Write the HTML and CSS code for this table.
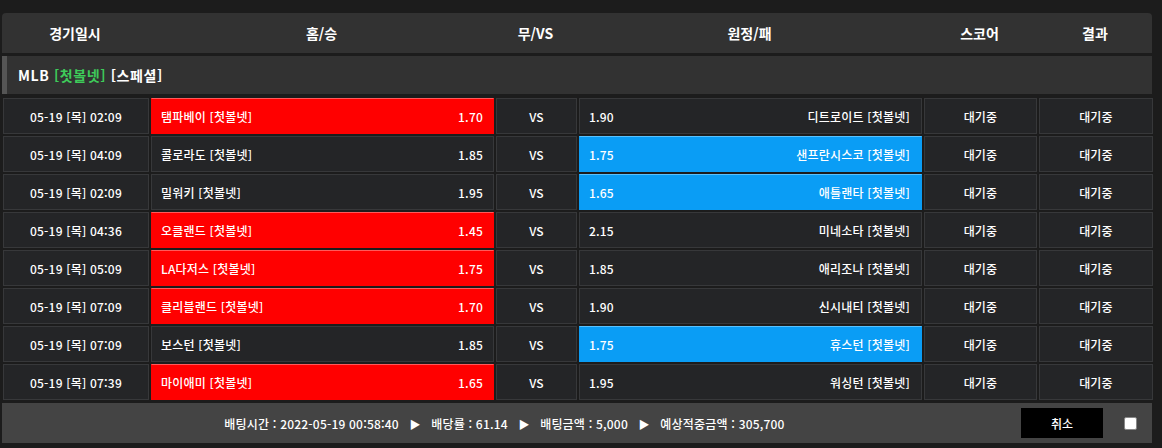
FILE: index.html
```html
<!DOCTYPE html>
<html lang="ko">
<head>
<meta charset="utf-8">
<link rel="stylesheet" href="styles.css">
</head>
<body>
<div class="board">
  <div class="thead">
    <div>경기일시</div>
    <div>홈/승</div>
    <div>무/VS</div>
    <div>원정/패</div>
    <div>스코어</div>
    <div>결과</div>
  </div>
  <div class="league">MLB <span class="green">[첫볼넷]</span> [스페셜]</div>
  <div class="rows">
    <div class="row">
      <div class="cell">05-19 [목] 02:09</div>
      <div class="cell home red"><span>탬파베이 [첫볼넷]</span><span>1.70</span></div>
      <div class="cell">VS</div>
      <div class="cell away"><span>1.90</span><span>디트로이트 [첫볼넷]</span></div>
      <div class="cell">대기중</div>
      <div class="cell">대기중</div>
    </div>
    <div class="row">
      <div class="cell">05-19 [목] 04:09</div>
      <div class="cell home"><span>콜로라도 [첫볼넷]</span><span>1.85</span></div>
      <div class="cell">VS</div>
      <div class="cell away blue"><span>1.75</span><span>샌프란시스코 [첫볼넷]</span></div>
      <div class="cell">대기중</div>
      <div class="cell">대기중</div>
    </div>
    <div class="row">
      <div class="cell">05-19 [목] 02:09</div>
      <div class="cell home"><span>밀워키 [첫볼넷]</span><span>1.95</span></div>
      <div class="cell">VS</div>
      <div class="cell away blue"><span>1.65</span><span>애틀랜타 [첫볼넷]</span></div>
      <div class="cell">대기중</div>
      <div class="cell">대기중</div>
    </div>
    <div class="row">
      <div class="cell">05-19 [목] 04:36</div>
      <div class="cell home red"><span>오클랜드 [첫볼넷]</span><span>1.45</span></div>
      <div class="cell">VS</div>
      <div class="cell away"><span>2.15</span><span>미네소타 [첫볼넷]</span></div>
      <div class="cell">대기중</div>
      <div class="cell">대기중</div>
    </div>
    <div class="row">
      <div class="cell">05-19 [목] 05:09</div>
      <div class="cell home red"><span>LA다저스 [첫볼넷]</span><span>1.75</span></div>
      <div class="cell">VS</div>
      <div class="cell away"><span>1.85</span><span>애리조나 [첫볼넷]</span></div>
      <div class="cell">대기중</div>
      <div class="cell">대기중</div>
    </div>
    <div class="row">
      <div class="cell">05-19 [목] 07:09</div>
      <div class="cell home red"><span>클리블랜드 [첫볼넷]</span><span>1.70</span></div>
      <div class="cell">VS</div>
      <div class="cell away"><span>1.90</span><span>신시내티 [첫볼넷]</span></div>
      <div class="cell">대기중</div>
      <div class="cell">대기중</div>
    </div>
    <div class="row">
      <div class="cell">05-19 [목] 07:09</div>
      <div class="cell home"><span>보스턴 [첫볼넷]</span><span>1.85</span></div>
      <div class="cell">VS</div>
      <div class="cell away blue"><span>1.75</span><span>휴스턴 [첫볼넷]</span></div>
      <div class="cell">대기중</div>
      <div class="cell">대기중</div>
    </div>
    <div class="row">
      <div class="cell">05-19 [목] 07:39</div>
      <div class="cell home red"><span>마이애미 [첫볼넷]</span><span>1.65</span></div>
      <div class="cell">VS</div>
      <div class="cell away"><span>1.95</span><span>워싱턴 [첫볼넷]</span></div>
      <div class="cell">대기중</div>
      <div class="cell">대기중</div>
    </div>
  </div>
  <div class="footer">
    <div class="summary">배팅시간 : 2022-05-19 00:58:40 <span class="arrow">▶</span> 배당률 : 61.14 <span class="arrow">▶</span> 배팅금액 : 5,000 <span class="arrow">▶</span> 예상적중금액 : 305,700</div>
    <button class="cancel">취소</button>
    <span class="check"></span>
  </div>
</div>
</body>
</html>
```

FILE: styles.css
```css
html, body {
  margin: 0;
  padding: 0;
  background: #1c1c1c;
}
body {
  padding: 13px 0 0 2px;
  font-family: "Noto Sans CJK KR", "Noto Sans", sans-serif;
  font-size: 12px;
  color: #fff;
}
.board {
  width: 1150px;
}
.thead {
  display: grid;
  grid-template-columns: 146px 343px 81px 343px 113px 114px;
  column-gap: 2px;
  height: 40px;
  align-items: center;
  background: #323232;
  border-radius: 4px 4px 0 0;
  font-size: 14px;
  font-weight: 700;
  text-align: center;
}
.league {
  margin-top: 3px;
  height: 38px;
  line-height: 38px;
  background: #323232;
  border-left: 5px solid #555;
  padding-left: 11px;
  font-size: 14px;
  font-weight: 700;
  letter-spacing: 0.6px;
}
.green { color: #3ecb5a; }
.rows {
  margin-top: 4px;
  padding-left: 1px;
  display: flex;
  flex-direction: column;
  gap: 2px;
}
.row {
  display: grid;
  grid-template-columns: 146px 343px 81px 343px 113px 114px;
  column-gap: 2px;
  height: 36px;
}
.cell {
  background: #242527;
  border: 1px solid #37383a;
  display: flex;
  align-items: center;
  justify-content: center;
  font-weight: 500;
  letter-spacing: 0.2px;
}
.home, .away {
  justify-content: space-between;
  padding: 0 10px 0 9px;
}
.away { padding: 0 11px 0 9px; }
.red {
  background: #ff0000;
  border-color: #ff0000;
  border-top-color: #ff5a5a;
}
.blue {
  background: #0a9df5;
  border-color: #0a9df5;
  border-top-color: #58c2ff;
}
.footer {
  margin-top: 3px;
  height: 40px;
  background: #444;
  display: flex;
  align-items: center;
}
.summary {
  flex: 1;
  text-align: center;
  font-weight: 500;
  letter-spacing: 0.2px;
  padding-right: 14px;
}
.arrow {
  font-size: 11px;
  margin: 0 7px;
}
.cancel {
  width: 82px;
  height: 30px;
  background: #000;
  color: #fff;
  border: none;
  font-family: inherit;
  font-size: 12px;
  font-weight: 500;
  margin-right: 21px;
}
.check {
  width: 11px;
  height: 11px;
  background: #fff;
  border: 1px solid #888;
  border-radius: 2px;
  margin-right: 15px;
}
```
